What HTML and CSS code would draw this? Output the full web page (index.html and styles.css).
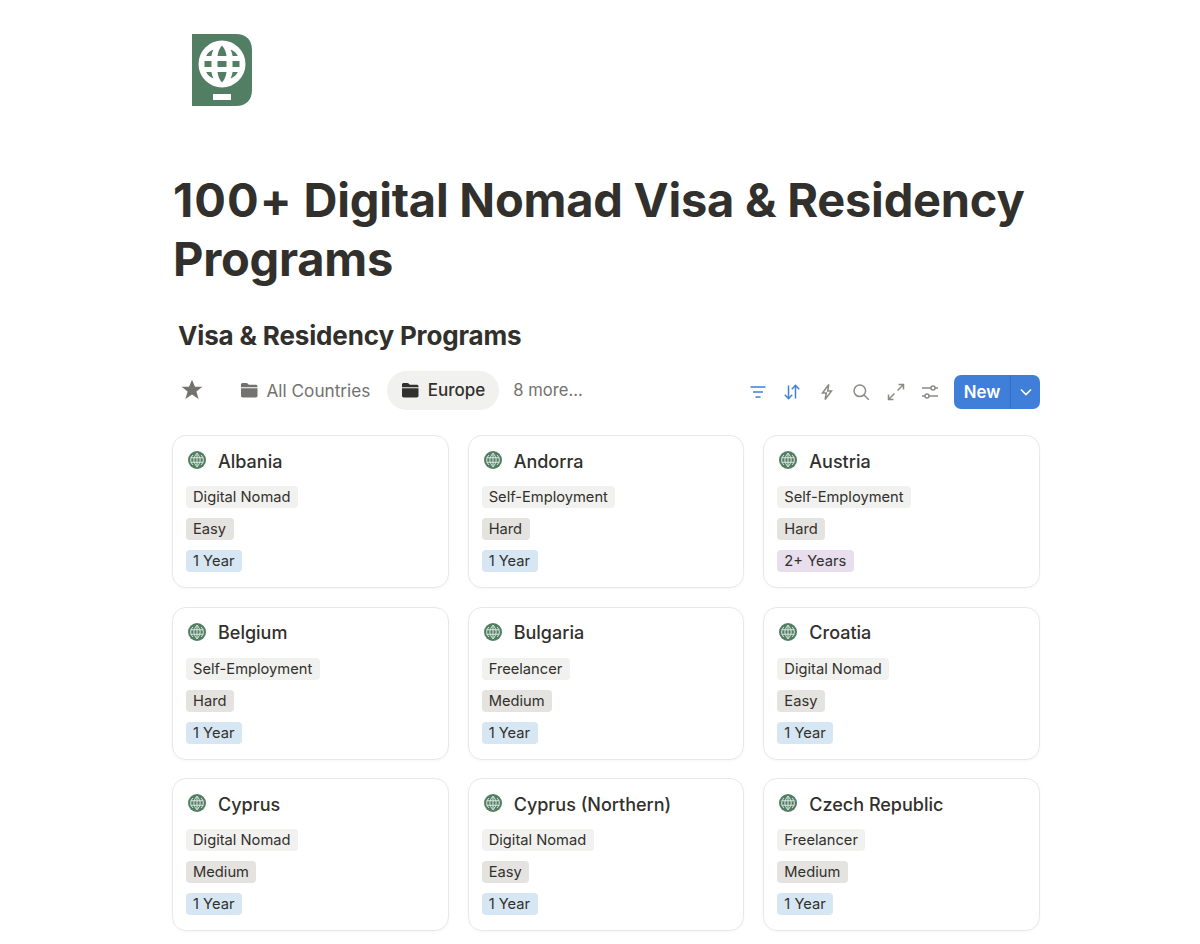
FILE: index.html
```html
<!DOCTYPE html>
<html lang="en">
<head>
<meta charset="utf-8">
<title>100+ Digital Nomad Visa &amp; Residency Programs</title>
<link rel="stylesheet" href="styles.css">
</head>
<body>
<svg class="defs" width="0" height="0" aria-hidden="true">
  <defs>
    <symbol id="globe" viewBox="0 0 20 20">
      <circle cx="10" cy="10" r="10" fill="#527f64"/>
      <g fill="none" stroke="#dfe9e3" stroke-width="1.100">
        <path d="M10 2.400C7.600 5 6.500 7.500 6.500 10s1.100 5 3.500 7.600C12.400 15 13.500 12.500 13.500 10S12.400 5 10 2.400z"/>
        <path d="M2.900 7.500h14.200M2.900 12.500h14.200M10 2.400v15.200"/>
        <path d="M5.500 4.500C3.900 6 3 8 3 10s.9 4 2.500 5.500M14.500 4.500C16.100 6 17 8 17 10s-.9 4-2.500 5.500"/>
      </g>
    </symbol>
    <symbol id="folder" viewBox="0 0 20 18">
      <path d="M1 3C1 1.900 1.800 1.200 2.800 1.200h4c.8 0 1.200.3 1.700.8l1 1.100H17c1.200 0 2 .7 2 1.800v.7H1z" fill="currentColor"/>
      <path d="M1 6.800h18v8.200c0 1.100-.8 1.800-2 1.800H3c-1.200 0-2-.7-2-1.800z" fill="currentColor"/>
    </symbol>
  </defs>
</svg>
<main class="page">
  <svg class="logo" viewBox="0 0 60 72" role="img" aria-label="Passport">
    <path d="M0 0H44C54 0 60 6 60 16V56C60 66 54 72 44 72H0Z" fill="#527f64"/>
    <circle cx="30" cy="30" r="23.500" fill="#fff"/>
    <g fill="#527f64">
      <path d="M30 11.500c2.600 2.800 4 6.200 4.500 10.500h-9c.5-4.300 1.900-7.700 4.500-10.500z"/>
      <path d="M21.500 15.500c-1.100 2-1.800 4.200-2.100 6.500h-5.200c1.200-2.900 3.500-5.200 7.300-6.500z"/>
      <path d="M38.500 15.500c1.100 2 1.800 4.200 2.100 6.500h5.200c-1.200-2.900-3.500-5.200-7.300-6.500z"/>
      <rect x="12.500" y="27" width="7" height="6"/>
      <rect x="25.500" y="27" width="9" height="6"/>
      <rect x="40.500" y="27" width="7" height="6"/>
      <path d="M30 48.500c2.600-2.800 4-6.200 4.500-10.500h-9c.5 4.300 1.900 7.700 4.500 10.500z"/>
      <path d="M21.500 44.500c-1.100-2-1.800-4.200-2.100-6.500h-5.200c1.200 2.900 3.500 5.200 7.300 6.500z"/>
      <path d="M38.500 44.500c1.100-2 1.800-4.200 2.100-6.500h5.200c-1.200 2.900-3.500 5.200-7.300 6.500z"/>
    </g>
    <rect x="21" y="60" width="18" height="6" fill="#fff"/>
  </svg>

  <h1 class="title"><span class="line"><span class="num">100+</span> Digital Nomad Visa &amp; Residency</span> <span class="line">Programs</span></h1>
  <h2 class="db-title">Visa &amp; Residency Programs</h2>

  <div class="toolbar">
    <div class="tabs">
      <svg class="star" viewBox="0 0 22 22" aria-hidden="true"><path d="M11 .8l3 7h7.400l-6 4.700 2.200 7.400L11 15.500l-6.600 4.400 2.200-7.400-6-4.700H8z" fill="#73726e"/></svg>
      <div class="tab"><svg class="folder" aria-hidden="true"><use href="#folder"/></svg>All Countries</div>
      <div class="tab active"><svg class="folder" aria-hidden="true"><use href="#folder"/></svg>Europe</div>
      <div class="more">8 more...</div>
    </div>
    <div class="tools">
      <svg class="tool blue" viewBox="0 0 18 18" aria-hidden="true"><path d="M1.500 4h15M4 9h10M6.500 14h5"/></svg>
      <svg class="tool blue" viewBox="0 0 18 18" aria-hidden="true"><path d="M5.500 2.500v13M1.800 11.800l3.700 3.900 3.700-3.900M12.500 15.500v-13M8.800 6.200l3.700-3.900 3.700 3.900"/></svg>
      <svg class="tool" viewBox="0 0 18 18" aria-hidden="true"><path d="M10.800 1.500L4.500 10h3.800l-1.200 6.500L13.500 8H9.700z"/></svg>
      <svg class="tool" viewBox="0 0 18 18" aria-hidden="true"><circle cx="7.800" cy="7.800" r="5.800"/><path d="M12 12l4.800 4.800"/></svg>
      <svg class="tool" viewBox="0 0 18 18" aria-hidden="true"><path d="M10.500 7.500l6-6M11.500 1.500h5v5M7.500 10.500l-6 6M1.500 11.500v5h5"/></svg>
      <svg class="tool" viewBox="0 0 18 18" aria-hidden="true"><path d="M1 5h9M14 5h3M1 13h3M8 13h9"/><circle cx="12" cy="5" r="2"/><circle cx="6" cy="13" r="2"/></svg>
      <div class="new">
        <span class="new-label">New</span>
        <span class="new-caret"><svg viewBox="0 0 12 8" aria-hidden="true"><path d="M1 1.500l5 5 5-5"/></svg></span>
      </div>
    </div>
  </div>

  <section class="grid">
    <article class="card"><div class="card-head"><svg class="globe"><use href="#globe"/></svg>Albania</div><span class="tag light">Digital Nomad</span><span class="tag grey">Easy</span><span class="tag blue">1 Year</span></article>
    <article class="card"><div class="card-head"><svg class="globe"><use href="#globe"/></svg>Andorra</div><span class="tag light">Self-Employment</span><span class="tag grey">Hard</span><span class="tag blue">1 Year</span></article>
    <article class="card"><div class="card-head"><svg class="globe"><use href="#globe"/></svg>Austria</div><span class="tag light">Self-Employment</span><span class="tag grey">Hard</span><span class="tag purple">2+ Years</span></article>
    <article class="card"><div class="card-head"><svg class="globe"><use href="#globe"/></svg>Belgium</div><span class="tag light">Self-Employment</span><span class="tag grey">Hard</span><span class="tag blue">1 Year</span></article>
    <article class="card"><div class="card-head"><svg class="globe"><use href="#globe"/></svg>Bulgaria</div><span class="tag light">Freelancer</span><span class="tag grey">Medium</span><span class="tag blue">1 Year</span></article>
    <article class="card"><div class="card-head"><svg class="globe"><use href="#globe"/></svg>Croatia</div><span class="tag light">Digital Nomad</span><span class="tag grey">Easy</span><span class="tag blue">1 Year</span></article>
    <article class="card"><div class="card-head"><svg class="globe"><use href="#globe"/></svg>Cyprus</div><span class="tag light">Digital Nomad</span><span class="tag grey">Medium</span><span class="tag blue">1 Year</span></article>
    <article class="card"><div class="card-head"><svg class="globe"><use href="#globe"/></svg>Cyprus (Northern)</div><span class="tag light">Digital Nomad</span><span class="tag grey">Easy</span><span class="tag blue">1 Year</span></article>
    <article class="card"><div class="card-head"><svg class="globe"><use href="#globe"/></svg>Czech Republic</div><span class="tag light">Freelancer</span><span class="tag grey">Medium</span><span class="tag blue">1 Year</span></article>
  </section>
</main>
</body>
</html>
```

FILE: styles.css
```css
* { box-sizing: border-box; }
html, body { margin: 0; padding: 0; background: #fff; }
body {
  height: 944px;
  overflow: hidden;
  font-family: Inter, "Liberation Sans", sans-serif;
  color: #32302c;
}
.defs { position: absolute; }
.page {
  width: 868px;
  margin-left: 172px;
  padding-top: 34px;
}
.logo {
  display: block;
  width: 60px;
  height: 72px;
  margin-left: 20px;
}
.title {
  margin: 64px 0 0;
  font-size: 47px;
  line-height: 59px;
  font-weight: 700;
  letter-spacing: -0.230px;
  padding-left: 1px;
}
.line { display: block; }
.num { letter-spacing: 1px; }
.db-title {
  margin: 30px 0 0;
  padding-left: 6px;
  font-size: 26px;
  line-height: 36px;
  font-weight: 700;
  letter-spacing: -0.150px;
}
.toolbar {
  margin-top: 16px;
  height: 40px;
  display: flex;
  justify-content: space-between;
  align-items: center;
}
.tabs { display: flex; align-items: center; }
.star { width: 22px; height: 22px; margin: 0 37px 0 9px; }
.tab {
  display: flex;
  align-items: center;
  gap: 8px;
  height: 39px;
  font-size: 17.200px;
  color: #73726e;
}
.tab.active {
  margin-left: 17px;
  padding: 0 14px;
  background: #f1f1ef;
  border-radius: 20px;
  color: #32302c;
  font-size: 17px;
  font-weight: 500;
}
.folder { width: 18.500px; height: 16.500px; }
.more { margin-left: 14px; font-size: 16.600px; color: #73726e; }
.tools { display: flex; align-items: center; padding-top: 4px; }
.tool {
  width: 18px;
  height: 18px;
  margin-right: 16.400px;
  fill: none;
  stroke: #8b8a86;
  stroke-width: 1.500;
}
.tool.blue { stroke: #3f7fd9; }
.tool:nth-of-type(6) { margin-right: 15px; }
.new {
  display: flex;
  height: 34px;
  width: 86px;
  border-radius: 7px;
  background: #3f7fd9;
  color: #fff;
  font-size: 16.800px;
  font-weight: 600;
}
.new-label {
  width: 57px;
  display: flex;
  align-items: center;
  justify-content: center;
  border-right: 1px solid #3670c4;
}
.new-caret { flex: 1; display: flex; align-items: center; justify-content: center; }
.new-caret svg { width: 12px; height: 8px; fill: none; stroke: #fff; stroke-width: 1.600; }
.grid {
  margin-top: 25px;
  display: grid;
  grid-template-columns: repeat(3, 1fr);
  column-gap: 19px;
  row-gap: 18.500px;
}
.card {
  height: 153px;
  border: 1px solid #e9e8e6;
  border-radius: 14px;
  box-shadow: 0 1px 3px rgba(15, 15, 15, 0.040);
  padding: 12px 13px 0;
  display: flex;
  flex-direction: column;
  align-items: flex-start;
}
.card-head {
  display: flex;
  align-items: center;
  height: 26px;
  font-size: 18px;
  font-weight: 500;
  color: #32302c;
  margin-bottom: 12px;
}
.globe { width: 18px; height: 18px; margin: -2px 12px 0 2px; }
.tag {
  height: 22px;
  padding: 0 7.500px 0 7px;
  margin-bottom: 10px;
  border-radius: 4px;
  font-size: 14.700px;
  line-height: 22px;
  color: #32302c;
}
.tag.light { background: #f1f1ef; }
.tag.grey { background: #e4e3e0; }
.tag.blue { background: #d6e6f2; }
.tag.purple { background: #e8deee; }
```
